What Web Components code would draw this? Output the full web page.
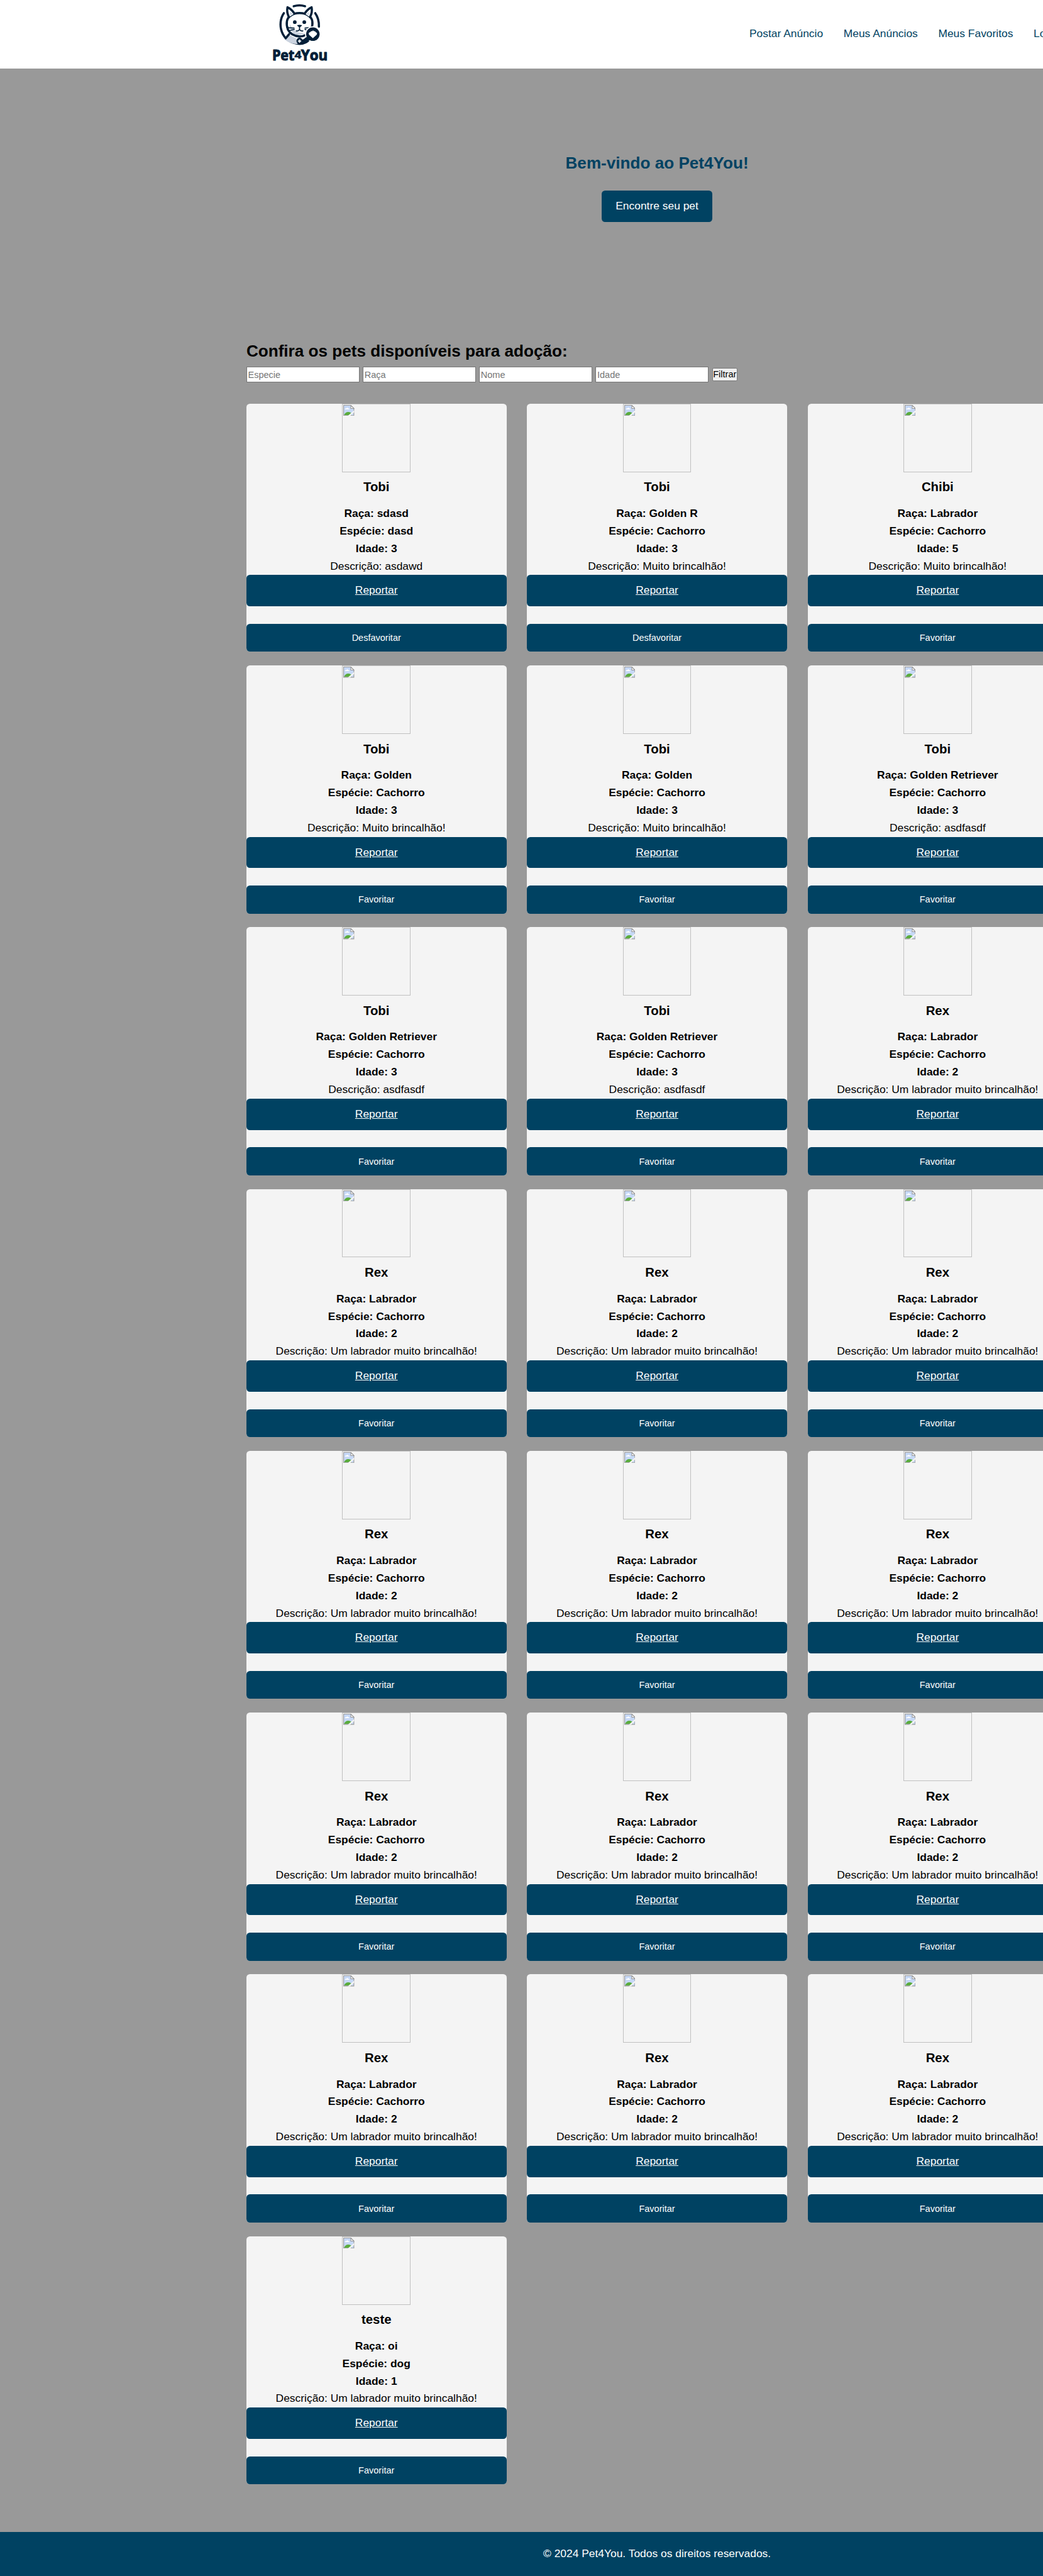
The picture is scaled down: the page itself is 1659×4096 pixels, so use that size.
<!DOCTYPE html>
<html lang="pt-BR">
<head>
<meta charset="utf-8">
<title>Pet4You</title>
<style>
html{overflow:hidden;background:#999}
body{margin:0;zoom:1.0886;font:16px/25.6px "Liberation Sans",Arial,sans-serif;color:#000;background:#999}
</style>
</head>
<body>
<pet-app></pet-app>
<script>
const define = (name, html, setup) => {
  const tpl = document.createElement('template');
  tpl.innerHTML = html;
  customElements.define(name, class extends HTMLElement {
    constructor() {
      super();
      this.attachShadow({mode: 'open'}).appendChild(tpl.content.cloneNode(true));
    }
    connectedCallback() { if (setup) setup(this, this.shadowRoot); }
  });
};

define('pet-logo', `
<style>:host{display:block;width:176px;height:100px}svg{display:block}</style>
<svg width="176" height="100" viewBox="0 0 660 375" role="img" aria-label="Pet4You">
  <g fill="none" stroke="#021f38" stroke-width="12" stroke-linecap="round" stroke-linejoin="round">
    <path d="M290 34Q322 24 352 34"/>
    <path d="M236 72C198 125 216 236 322 240C349 240 365 230 376 216" />
    <path d="M408 72Q430 103 428 146"/>
    <path d="M262 186L240 216C262 236 290 241 312 241L302 208Q280 202 262 186Z" fill="#cbd3df" stroke="none"/>
    <path d="M264 188L246 210"/>
    <path d="M258 160C246 130 252 100 270 88C296 66 348 66 374 88C394 100 398 130 386 160" fill="#fff"/>
    <path d="M264 94Q250 66 256 40Q278 50 294 74" fill="#fff"/>
    <path d="M379 94Q394 66 388 40Q366 50 350 74" fill="#fff"/>
    <path d="M270 66L270 84L284 77ZM374 66L373 84L360 77Z" fill="#cbd3df" stroke="none"/>
    <path d="M268 132Q272 184 306 190Q336 194 354 180Q330 184 306 174Q286 166 268 132" fill="#cbd3df" stroke="none"/>
    <path d="M258 162Q275 196 322 200Q340 200 358 190"/>
    <path d="M322 230Q352 228 364 208" stroke-width="18"/>
    <path d="M322 144V162M322 162Q314 172 304 169M322 162Q330 172 340 169M254 152L292 154M264 168L293 161M352 154L380 151M352 161L362 165" stroke-width="6"/>
  </g>
  <g fill="#021f38">
    <circle cx="296" cy="121" r="10"/><circle cx="348" cy="121" r="10"/>
    <path d="M308 138Q322 134 336 138Q330 149 322 150Q314 149 308 138Z"/>
    <circle cx="322" cy="224" r="17"/>
    <circle cx="395" cy="187" r="43" fill="#fff"/>
    <circle cx="395" cy="187" r="37"/>
    <path d="M360 202L338 232L364 226L388 216Z"/>
  </g>
  <path d="M322 216V234M313 225H331" stroke="#fff" stroke-width="6"/>
  <path d="M395 209L374 190Q368 178 382 176Q382 168 391 171Q396 164 401 171Q410 168 409 176Q422 180 416 190Z" fill="#fff"/>
  <g font-family="'Open Sans'" font-weight="700" fill="#021f38" stroke="#021f38" stroke-width="4" stroke-linejoin="round">
    <text x="172" y="330" font-size="82" textLength="122" lengthAdjust="spacingAndGlyphs">Pet</text>
    <text x="295" y="321" font-size="56" textLength="38" lengthAdjust="spacingAndGlyphs" stroke-width="2">4</text>
    <text x="330" y="330" font-size="82" textLength="146" lengthAdjust="spacingAndGlyphs">You</text>
  </g>
</svg>`);

define('site-header', `
<style>
:host{display:flex;height:100px;background:#fff;align-items:center;padding-left:352px;box-sizing:border-box}
nav{display:flex;gap:30px;margin-left:567px;white-space:nowrap}
a{color:#004262}
</style>
<pet-logo></pet-logo>
<nav><a>Postar Anúncio</a><a>Meus Anúncios</a><a>Meus Favoritos</a><a>Logout</a></nav>`);

define('hero-banner', `
<style>
:host{display:flex;flex-direction:column;align-items:center;height:394.6px;padding-top:120px;box-sizing:border-box}
h1{margin:0 0 20px;font-size:24px;line-height:38.4px;color:#004262}
a{padding:10px 20px;border-radius:5px;background:#004262;color:#fff}
</style>
<h1>Bem-vindo ao Pet4You!</h1><a>Encontre seu pet</a>`);

define('pet-filter', `
<style>
:host{display:flex;height:56.6px;padding-top:2.3px;box-sizing:border-box;gap:4.7px;align-items:flex-start}
input{width:165.4px;height:23.6px;box-sizing:border-box;border:1px solid #767676;border-radius:0;background:#fff;padding:0 1.5px;margin:0;font:13.333px "Liberation Sans",Arial,sans-serif}
input::placeholder{color:#757575}
button{width:37.2px;height:18.8px;margin:2.4px 0 0;padding:0;box-sizing:border-box;border:1px solid #767676;border-radius:2px;background:#efefef;color:#000;font:13.333px/16px "Liberation Sans",Arial,sans-serif;white-space:nowrap}
</style>
<input placeholder="Especie"><input placeholder="Raça"><input placeholder="Nome"><input placeholder="Idade"><button>Filtrar</button>`);

define('missing-photo', `
<style>
:host{display:block;width:100px;height:100px;box-sizing:border-box;border:1px solid #c0c0c0;padding:1px}
svg{display:block}
</style>
<svg width="16" height="16" viewBox="0 0 16 16">
  <path d="M.5.5H11L15.500 5V15.500H.5Z" fill="#c6d8f6"/>
  <path d="M2 6.500Q3 4.500 4.500 5Q6 2.600 7.500 5Q9.500 5 9 6.500Z" fill="#fff"/>
  <path d="M1 15Q3 10 7.500 10Q10 10 12 12V15Z" fill="#5aac3c"/>
  <path d="M.5 .5H11L15.500 5V15.500H.5Z" fill="none" stroke="#999"/>
  <path d="M11 .5V5H15.500Z" fill="#fff" stroke="#999"/>
  <path d="M6.500 16L16 7.500V10.500L10 16Z" fill="#f4f4f4"/>
</svg>`);

define('pet-card', `
<style>
:host{display:flex;flex-direction:column;align-items:center;height:362.4px;border-radius:5px;background:#f4f4f4;white-space:nowrap}
h3{margin:7px 0 11px;font-size:18.72px;line-height:30px}
p{margin:0}
.info{font-weight:bold}
.report,.fav{align-self:stretch;text-align:center;background:#004262;color:#fff;border-radius:5px}
.report{padding:10px;text-decoration:underline}
.fav{margin-top:25.6px;height:40.8px;padding:0;border:0;font:13.333px "Liberation Sans",Arial,sans-serif}
</style>
<missing-photo></missing-photo>
<h3><slot></slot></h3>
<p class="info breed"></p><p class="info species"></p><p class="info age"></p>
<p class="desc"></p>
<a class="report">Reportar</a><button class="fav"></button>`, (el, root) => {
  const put = (sel, text) => root.querySelector(sel).textContent = text;
  put('.breed', 'Raça: ' + el.getAttribute('breed'));
  put('.species', 'Espécie: ' + el.getAttribute('species'));
  put('.age', 'Idade: ' + el.getAttribute('age'));
  put('.desc', 'Descrição: ' + el.getAttribute('description'));
  put('.fav', el.hasAttribute('favorite') ? 'Desfavoritar' : 'Favoritar');
});

const rex = ['Rex', 'Labrador', 'Cachorro', 2, 'Um labrador muito brincalhão!'];
const retriever = ['Tobi', 'Golden Retriever', 'Cachorro', 3, 'asdfasdf'];
const golden = ['Tobi', 'Golden', 'Cachorro', 3, 'Muito brincalhão!'];
const pets = [
  ['Tobi', 'sdasd', 'dasd', 3, 'asdawd', true],
  ['Tobi', 'Golden R', 'Cachorro', 3, 'Muito brincalhão!', true],
  ['Chibi', 'Labrador', 'Cachorro', 5, 'Muito brincalhão!'],
  golden, golden, retriever, retriever, retriever,
  ...Array(13).fill(rex),
  ['teste', 'oi', 'dog', 1, 'Um labrador muito brincalhão!']
];

define('pet-grid', `
<style>
:host{display:grid;grid-template-columns:repeat(3,380px);gap:20px 30px}
</style>`, (el, root) => {
  for (const [name, breed, species, age, description, favorite] of pets) {
    const card = document.createElement('pet-card');
    card.textContent = name;
    for (const [key, value] of Object.entries({breed, species, age, description})) card.setAttribute(key, value);
    if (favorite) card.setAttribute('favorite', '');
    root.appendChild(card);
  }
});

define('site-footer', `
<style>
:host{display:block;background:#004262;color:#fff;text-align:center;padding:20px 0}
</style><slot></slot>`);

define('pet-app', `
<style>
:host{display:block;overflow:hidden}
.page{width:1920px}
main{width:1200px;margin:0 auto;padding-bottom:69.2px}
h2{margin:0;font-size:24px;line-height:38.4px}
</style>
<div class="page">
  <site-header></site-header>
  <hero-banner></hero-banner>
  <main>
    <h2>Confira os pets disponíveis para adoção:</h2>
    <pet-filter></pet-filter>
    <pet-grid></pet-grid>
  </main>
  <site-footer>© 2024 Pet4You. Todos os direitos reservados.</site-footer>
</div>`);
</script>
</body>
</html>
